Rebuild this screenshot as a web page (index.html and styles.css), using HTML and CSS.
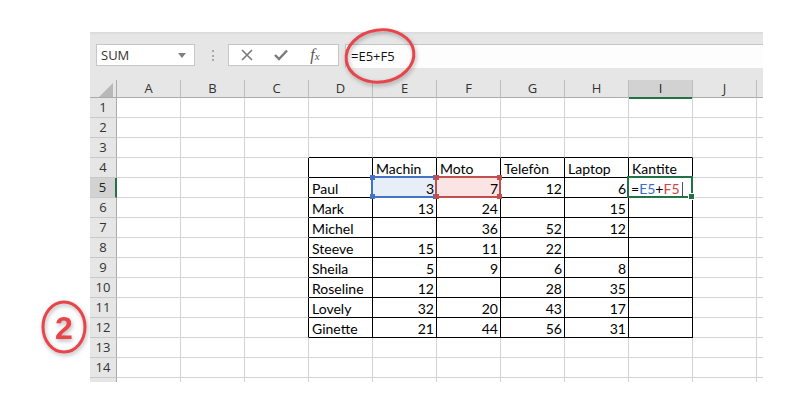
FILE: index.html
```html
<!DOCTYPE html>
<html lang="ht">
<head>
<meta charset="utf-8">
<title>Excel - Kantite</title>
<link rel="stylesheet" href="styles.css">
</head>
<body>
<div class="page">
  <div class="sheet">
    <div class="toolbar">
      <div class="namebox"><span>SUM</span><svg class="dd" width="8" height="5" viewBox="0 0 8 5"><path d="M0 0h8L4 5z" fill="#808080"/></svg></div>
      <div class="grip"></div>
      <div class="fbtns">
        <svg class="ico" width="20" height="12" viewBox="0 0 20 12"><path d="M5 1l10 10M15 1L5 11" stroke="#7a7a7a" stroke-width="1.6" fill="none"/></svg>
        <svg class="ico" width="20" height="12" viewBox="0 0 20 12"><path d="M4 6l4 4 8-8.5" stroke="#7a7a7a" stroke-width="2.4" fill="none"/></svg>
        <span class="fx">f<span class="fxs">x</span></span>
      </div>
      <div class="formula">=E5+F5</div>
    </div>
    <div class="colhead">
      <div class="corner"><svg width="14" height="14" viewBox="0 0 14 14"><path d="M14 0V14H0z" fill="#b8b8b8"/></svg></div>
      <div>A</div><div>B</div><div>C</div><div>D</div><div>E</div><div>F</div><div>G</div><div>H</div><div class="sel">I</div><div>J</div><div class="stub"></div>
    </div>

    <div class="row"><div class="rh">1</div><div class="c"></div><div class="c"></div><div class="c"></div><div class="c"></div><div class="c"></div><div class="c"></div><div class="c"></div><div class="c"></div><div class="c"></div><div class="c"></div><div class="c k"></div></div>
    <div class="row"><div class="rh">2</div><div class="c"></div><div class="c"></div><div class="c"></div><div class="c"></div><div class="c"></div><div class="c"></div><div class="c"></div><div class="c"></div><div class="c"></div><div class="c"></div><div class="c k"></div></div>
    <div class="row"><div class="rh">3</div><div class="c"></div><div class="c"></div><div class="c"></div><div class="c tt"></div><div class="c tt"></div><div class="c tt"></div><div class="c tt"></div><div class="c tt"></div><div class="c tt"></div><div class="c"></div><div class="c k"></div></div>
    <div class="row"><div class="rh">4</div><div class="c"></div><div class="c"></div><div class="c tl"></div><div class="c t"></div><div class="c t">Machin</div><div class="c t">Moto</div><div class="c t">Telefòn</div><div class="c t">Laptop</div><div class="c t">Kantite</div><div class="c"></div><div class="c k"></div></div>
    <div class="row"><div class="rh rsel">5</div><div class="c"></div><div class="c"></div><div class="c tl"></div><div class="c t">Paul</div><div class="c t n ref blue">3<b class="h h1"></b><b class="h h2"></b><b class="h h3"></b><b class="h h4"></b></div><div class="c t n ref red">7<b class="h h1"></b><b class="h h2"></b><b class="h h3"></b><b class="h h4"></b></div><div class="c t n">12</div><div class="c t n">6</div><div class="c t active"><span>=</span><span class="fb">E5</span><span>+</span><span class="fr">F5</span><i class="caret"></i><b class="fill"></b></div><div class="c"></div><div class="c k"></div></div>
    <div class="row"><div class="rh">6</div><div class="c"></div><div class="c"></div><div class="c tl"></div><div class="c t">Mark</div><div class="c t n">13</div><div class="c t n">24</div><div class="c t n"></div><div class="c t n">15</div><div class="c t"></div><div class="c"></div><div class="c k"></div></div>
    <div class="row"><div class="rh">7</div><div class="c"></div><div class="c"></div><div class="c tl"></div><div class="c t">Michel</div><div class="c t n"></div><div class="c t n">36</div><div class="c t n">52</div><div class="c t n">12</div><div class="c t"></div><div class="c"></div><div class="c k"></div></div>
    <div class="row"><div class="rh">8</div><div class="c"></div><div class="c"></div><div class="c tl"></div><div class="c t">Steeve</div><div class="c t n">15</div><div class="c t n">11</div><div class="c t n">22</div><div class="c t n"></div><div class="c t"></div><div class="c"></div><div class="c k"></div></div>
    <div class="row"><div class="rh">9</div><div class="c"></div><div class="c"></div><div class="c tl"></div><div class="c t">Sheila</div><div class="c t n">5</div><div class="c t n">9</div><div class="c t n">6</div><div class="c t n">8</div><div class="c t"></div><div class="c"></div><div class="c k"></div></div>
    <div class="row"><div class="rh">10</div><div class="c"></div><div class="c"></div><div class="c tl"></div><div class="c t">Roseline</div><div class="c t n">12</div><div class="c t n"></div><div class="c t n">28</div><div class="c t n">35</div><div class="c t"></div><div class="c"></div><div class="c k"></div></div>
    <div class="row"><div class="rh">11</div><div class="c"></div><div class="c"></div><div class="c tl"></div><div class="c t">Lovely</div><div class="c t n">32</div><div class="c t n">20</div><div class="c t n">43</div><div class="c t n">17</div><div class="c t"></div><div class="c"></div><div class="c k"></div></div>
    <div class="row"><div class="rh">12</div><div class="c"></div><div class="c"></div><div class="c tl"></div><div class="c t">Ginette</div><div class="c t n">21</div><div class="c t n">44</div><div class="c t n">56</div><div class="c t n">31</div><div class="c t"></div><div class="c"></div><div class="c k"></div></div>
    <div class="row"><div class="rh">13</div><div class="c"></div><div class="c"></div><div class="c"></div><div class="c"></div><div class="c"></div><div class="c"></div><div class="c"></div><div class="c"></div><div class="c"></div><div class="c"></div><div class="c k"></div></div>
    <div class="row"><div class="rh">14</div><div class="c"></div><div class="c"></div><div class="c"></div><div class="c"></div><div class="c"></div><div class="c"></div><div class="c"></div><div class="c"></div><div class="c"></div><div class="c"></div><div class="c k"></div></div>
    <div class="row stubrow"><div class="rh"></div><div class="c"></div><div class="c"></div><div class="c"></div><div class="c"></div><div class="c"></div><div class="c"></div><div class="c"></div><div class="c"></div><div class="c"></div><div class="c"></div><div class="c k"></div></div>
  </div>

  <svg class="annot" width="812" height="420" viewBox="0 0 812 420">
    <ellipse cx="380" cy="56" rx="34" ry="26" transform="rotate(-8 380 56)" fill="none" stroke="#e8444b" stroke-width="3"/>
    <ellipse cx="64" cy="327" rx="21" ry="25" fill="none" stroke="#e8444b" stroke-width="3"/>
    <text x="64" y="339" text-anchor="middle" class="num">2</text>
  </svg>
</div>
</body>
</html>
```

FILE: styles.css
```css
* { box-sizing: border-box; }

body {
  margin: 0;
  background: #ffffff;
  font-family: "Open Sans", "Liberation Sans", sans-serif;
}

.page {
  position: relative;
  width: 812px;
  height: 420px;
  padding: 32px 0 0 90px;
  overflow: hidden;
}

.sheet {
  width: 673px;
  overflow: hidden;
}

/* ---------- toolbar / formula bar ---------- */
.toolbar {
  height: 46px;
  background: linear-gradient(#d9d9d9 0, #e6e6e6 3px, #e6e6e6 100%);
  display: flex;
  align-items: flex-start;
  padding: 12px 0 0 6px;
}

.namebox {
  width: 99px;
  height: 22px;
  background: #fff;
  border: 1px solid #c6c6c6;
  display: flex;
  align-items: center;
  justify-content: space-between;
  padding: 0 8px 0 4px;
  font-size: 13px;
  color: #333;
}

.grip {
  width: 2px;
  height: 11px;
  margin: 6px 0 0 17px;
  border-left: 2px dotted #a9a9a9;
}

.fbtns {
  margin-left: 14px;
  width: 111px;
  height: 22px;
  background: #fff;
  border: 1px solid #c6c6c6;
  display: flex;
  align-items: center;
  gap: 14px;
  padding-left: 8px;
}

.ico { display: block; flex: none; }

.fx {
  width: 20px;
  text-align: center;
  font-family: "Liberation Serif", serif;
  font-style: italic;
  font-size: 16px;
  color: #555;
  line-height: 20px;
}
.fxs { font-size: 11px; }

.formula {
  margin-left: 6px;
  flex: 1;
  height: 24px;
  background: #fdfdfd;
  border-top: 1px solid #c6c6c6;
  border-left: 1px solid #c6c6c6;
  padding-left: 5px;
  font-size: 13px;
  line-height: 22px;
  color: #111;
}

/* ---------- headers ---------- */
.colhead {
  display: grid;
  grid-template-columns: 27px repeat(10, 64px) 6px;
  height: 20px;
  background: #e6e6e6;
  border-bottom: 1px solid #ababab;
}

.colhead > div {
  margin-top: 2px;
  border-right: 1px solid #bdbdbd;
  text-align: center;
  font-size: 13px;
  line-height: 17px;
  color: #333;
}

.colhead > .corner {
  display: flex;
  align-items: flex-end;
  justify-content: flex-end;
  padding: 0 3px 2px 0;
  border-right: 1px solid #ababab;
}
.corner svg { display: block; }

.colhead > .sel {
  background: #d2d2d2;
  border-bottom: 2px solid #217346;
  color: #222;
}

.colhead > .stub { border-right: none; }

/* ---------- grid ---------- */
.row {
  display: grid;
  grid-template-columns: 27px repeat(10, 64px) 6px;
  height: 20px;
}

.rh {
  background: #e6e6e6;
  border-right: 1px solid #ababab;
  border-bottom: 1px solid #c8c8c8;
  text-align: center;
  font-size: 13px;
  line-height: 19px;
  color: #333;
}

.rh.rsel {
  background: #d2d2d2;
  border-right: 2px solid #217346;
  color: #222;
}

.c {
  border-right: 1px solid #d4d4d4;
  border-bottom: 1px solid #d4d4d4;
  font-family: Lato, "Liberation Sans", sans-serif;
  font-size: 14px;
  line-height: 17px;
  padding: 2px 3px 0 3px;
  color: #000;
  white-space: nowrap;
  overflow: visible;
}

.c.k { border-right: none; }

.c.t { border-right-color: #000; border-bottom-color: #000; }
.c.tl { border-right-color: #000; }
.c.tt { border-bottom-color: #000; }
.c.n { text-align: right; padding-right: 2px; }

.stubrow { height: 4px; }
.stubrow .c { border-bottom: none; }
.stubrow .rh { border-bottom: none; }

/* ---------- reference highlights ---------- */
.ref { position: relative; }
.ref::before {
  content: "";
  position: absolute;
  left: -2px;
  top: -2px;
  right: -1px;
  bottom: -1px;
  border: 2px solid;
}
.ref.blue { background: #e8eef8; }
.ref.blue::before { border-color: #4472c4; }
.ref.red { background: #fbe4e4; }
.ref.red::before { border-color: #c0504d; }

.h {
  position: absolute;
  width: 5px;
  height: 5px;
}
.blue .h { background: #4472c4; }
.red .h { background: #c0504d; }
.h1 { left: -3px; top: -3px; }
.h2 { right: -2px; top: -3px; }
.h3 { left: -3px; bottom: -2px; }
.h4 { right: -2px; bottom: -2px; }

/* active cell */
.active {
  position: relative;
  padding-left: 2px;
}
.active::before {
  content: "";
  position: absolute;
  left: -2px;
  top: -2px;
  right: -1px;
  bottom: -1px;
  border: 2px solid #217346;
}
.fb { color: #3c6fc4; }
.fr { color: #d0453f; }
.caret {
  display: inline-block;
  width: 1px;
  height: 14px;
  background: #555;
  margin-left: 2px;
  vertical-align: -2px;
}
.fill {
  position: absolute;
  right: -3px;
  bottom: -3px;
  width: 5px;
  height: 5px;
  background: #217346;
  border: 1px solid #fff;
  box-sizing: content-box;
}

/* ---------- annotations ---------- */
.annot {
  position: absolute;
  left: 0;
  top: 0;
  pointer-events: none;
  filter: drop-shadow(1px 2px 2px rgba(0, 0, 0, 0.3));
}
.num {
  font-family: "Liberation Sans", sans-serif;
  font-weight: bold;
  font-size: 32px;
  fill: #e8444b;
}
```
